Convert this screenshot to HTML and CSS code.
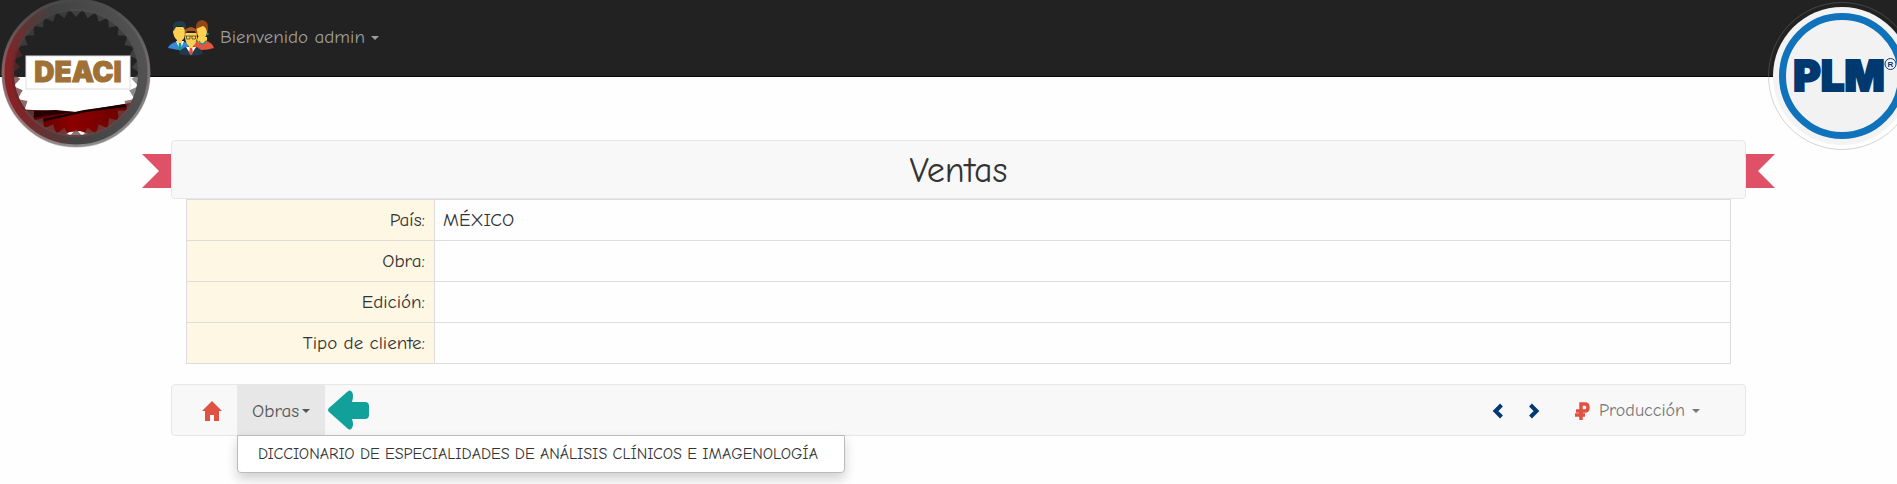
FILE: index.html
```html
<!DOCTYPE html>
<html lang="es">
<head>
<meta charset="utf-8">
<meta name="viewport" content="width=device-width, initial-scale=1">
<title>Ventas</title>
<link rel="stylesheet" href="styles.css">
</head>
<body>
<header class="topbar">
  <svg class="logo logo-deaci" viewBox="0 0 152 150" role="img" aria-label="DEACI">
    <defs>
      <linearGradient id="ring" x1="0" y1=".6" x2="1" y2=".4">
        <stop offset="0" stop-color="#8a2024"/>
        <stop offset=".2" stop-color="#603434"/>
        <stop offset=".42" stop-color="#424242"/>
        <stop offset="1" stop-color="#525252"/>
      </linearGradient>
      <linearGradient id="edge" x1="0" y1="0" x2="0" y2="1">
        <stop offset="0" stop-color="#4a4a4a"/>
        <stop offset=".5" stop-color="#8a8080"/>
        <stop offset="1" stop-color="#aaa"/>
      </linearGradient>
      <linearGradient id="cloth" x1="0" y1="0" x2="1" y2="0">
        <stop offset="0" stop-color="#3c0000"/>
        <stop offset=".45" stop-color="#8c0000"/>
        <stop offset="1" stop-color="#5c0000"/>
      </linearGradient>
      <clipPath id="inside"><circle cx="76" cy="73" r="64"/></clipPath>
      <path id="tooth" d="M69 9L76 17 83 9Z"/>
      <g id="teeth">
        <use href="#tooth"/>
        <use href="#tooth" transform="rotate(12 76 73)"/>
        <use href="#tooth" transform="rotate(24 76 73)"/>
        <use href="#tooth" transform="rotate(36 76 73)"/>
        <use href="#tooth" transform="rotate(48 76 73)"/>
      </g>
    </defs>
    <g clip-path="url(#inside)">
      <path d="M0 0H152V77H0Z" fill="#222"/>
      <path d="M0 77H152V150H0Z" fill="#fff"/>
      <path d="M10 109L76 112 148 100V150H10Z" fill="url(#cloth)"/>
      <path d="M26 111L56 110 76 112 30 118Z" fill="#240000"/>
      <path d="M34 121L84 110 134 103V106L86 112 36 123Z" fill="#160000"/>
      <path d="M60 136L70 132 80 131 94 136 90 142H66Z" fill="#fff"/>
    </g>
    <circle cx="76" cy="73" r="68" fill="none" stroke="url(#ring)" stroke-width="12"/>
    <g fill="#505050" fill-opacity=".65">
      <use href="#teeth"/>
      <use href="#teeth" transform="rotate(60 76 73)"/>
    </g>
    <g fill="#6c4444" fill-opacity=".75">
      <use href="#teeth" transform="rotate(120 76 73)"/>
      <use href="#teeth" transform="rotate(180 76 73)"/>
    </g>
    <use href="#teeth" transform="rotate(240 76 73)" fill="#602828" fill-opacity=".7"/>
    <use href="#teeth" transform="rotate(300 76 73)" fill="#444" fill-opacity=".7"/>
    <circle cx="76" cy="73" r="73" fill="none" stroke="url(#edge)" stroke-opacity=".7" stroke-width="3"/>
    <rect x="26" y="56" width="104" height="33" fill="#fff" stroke="#ddd"/>
    <text class="deaci-text" x="78" y="82" text-anchor="middle">DEACI</text>
  </svg>

  <button class="user" type="button">
    <svg class="people" viewBox="0 0 46 36" aria-hidden="true">
      <path d="M0 28Q1 23 12 21Q24 23 24 30Q12 31 0 28Z" fill="#3a86d8"/>
      <path d="M8 21L12 30 16 21Z" fill="#fff"/><path d="M11 22h2l1 7-2 2-2-2Z" fill="#169c88"/>
      <path d="M6 7H17V14Q16 20 14 20V23H9V20Q6 18 5 12Z" fill="#ffd052"/>
      <path d="M5 10Q4 1 11 1Q19 0 18 9L17 11Q16 6 12 6Q7 6 6 11Z" fill="#203b4c"/>
      <path d="M22 28Q23 22 34 20Q45 22 46 28Q34 32 22 28Z" fill="#e0563f"/>
      <path d="M29 20Q34 28 39 20V17H30Z" fill="#ffd052"/>
      <path d="M31 21Q34 27 38 21" fill="none" stroke="#159d8c" stroke-width="1.5"/>
      <path d="M28 6H39V13Q38 18 34 19Q30 18 29 13Z" fill="#ffd052"/>
      <path d="M28 9Q27 1 34 0Q41 1 40 9Q40 11 39 12Q38 7 35 6Q30 8 28 9Z" fill="#934615"/>
      <circle cx="39.5" cy="14" r="1.2" fill="#159d8c"/>
      <path d="M11 34Q11 28 23 26Q35 28 35 34Q23 37 11 34Z" fill="#203a4a"/>
      <path d="M18 27L23 35 28 27Z" fill="#fff"/><path d="M22 27h2l1 6-2 2-2-2Z" fill="#dd4b40"/>
      <path d="M17 13H29V18Q28 24 25 26V28H21V26Q18 24 17 18Z" fill="#ffd052"/>
      <path d="M17 15Q15 8 23 7Q31 8 29 15L27 11H19Z" fill="#b0571e"/>
      <path d="M17 16H29M18.500 16v3h3.500v-3M24 16v3h3.500v-3" fill="none" stroke="#343434" stroke-width=".7"/>
    </svg>
    <span class="user-name">Bienvenido admin</span>
    <span class="caret"></span>
  </button>

  <svg class="logo logo-plm" viewBox="0 0 129 150" role="img" aria-label="PLM">
    <circle cx="74" cy="76" r="73.500" fill="none" stroke="#888" stroke-opacity=".35"/>
    <circle cx="74" cy="76" r="69" fill="#f3f3f4"/>
    <circle cx="74" cy="76" r="59.500" fill="#f2f2f3" stroke="#1072bb" stroke-width="7"/>
    <text class="plm-text" x="71" y="91" text-anchor="middle">PLM</text>
    <circle cx="122.500" cy="64" r="5.500" fill="none" stroke="#0a3a70"/>
    <text class="reg-text" x="122.500" y="67" text-anchor="middle">R</text>
  </svg>
</header>

<main class="page">
  <div class="ribbon">
    <h1 class="title">Ventas</h1>
  </div>

  <table class="details">
    <tbody>
      <tr><th scope="row">País:</th><td>MÉXICO</td></tr>
      <tr><th scope="row">Obra:</th><td></td></tr>
      <tr><th scope="row">Edición:</th><td></td></tr>
      <tr><th scope="row">Tipo de cliente:</th><td></td></tr>
    </tbody>
  </table>

  <nav class="navbar">
    <a class="item home" href="#" aria-label="Inicio">
      <svg class="home-icon" viewBox="0 0 20 20" aria-hidden="true"><path d="M10 0L20 10H17V20H12V14H8V20H3V10H0Z" fill="#df5142"/></svg>
    </a>
    <div class="dropdown">
      <button class="item toggle" type="button" aria-expanded="true">Obras<span class="caret"></span></button>
      <div class="menu">
        <a class="menu-link" href="#">DICCIONARIO DE ESPECIALIDADES DE ANÁLISIS CLÍNICOS E IMAGENOLOGÍA</a>
      </div>
    </div>
    <svg class="arrow" viewBox="0 0 41 40" aria-hidden="true"><path d="M1 18L19 2Q22-1 24 2Q26 5 24 12H37Q41 12 41 16V25Q41 29 37 29H24Q26 35 24 38Q22 41 19 38L1 22Q-1 20 1 18Z" fill="#12a19a"/></svg>
    <div class="right">
      <a class="step" href="#" aria-label="Anterior"><svg class="chevron" viewBox="0 0 11 16" aria-hidden="true"><path d="M9.500 2L3.500 8l6 6" fill="none" stroke="#003a70" stroke-width="4"/></svg></a>
      <a class="step" href="#" aria-label="Siguiente"><svg class="chevron" viewBox="0 0 11 16" aria-hidden="true"><path d="M1.500 2l6 6-6 6" fill="none" stroke="#003a70" stroke-width="4"/></svg></a>
      <button class="item production" type="button">
        <svg class="ruble" viewBox="0 0 15 18" aria-hidden="true"><path d="M6 18V2H10Q13 2 13 5.500T10 9H1M0 13H10" fill="none" stroke="#df5142" stroke-width="3.500"/></svg>
        <span class="label">Producción</span>
        <span class="caret"></span>
      </button>
    </div>
  </nav>
</main>
</body>
</html>
```
FILE: styles.css
```css
* { box-sizing: border-box; }

body {
  min-height: 100vh;
  margin: 0;
  background: #fefefe;
  color: #333;
  font-family: "Comic Sans MS", "Comic Neue", "Open Sans", sans-serif;
  font-size: 19px;
  line-height: 24px;
}

button {
  border: 0;
  background: none;
  font: inherit;
  cursor: pointer;
}

a { color: inherit; text-decoration: none; }

.topbar {
  position: relative;
  display: flex;
  align-items: flex-start;
  height: 77px;
  padding: 16px 168px;
  background: #222;
  border-bottom: 1px solid #080808;
}

.logo { position: absolute; top: 0; height: 150px; }
.logo-deaci { left: 0; width: 152px; }
.logo-plm { right: 0; width: 129px; }

.deaci-text {
  font: 900 28px Inter, sans-serif;
  fill: #a07035;
  stroke: #a07035;
}

.plm-text {
  font: 900 42px Inter, sans-serif;
  fill: #003870;
  stroke: #003870;
  stroke-width: 2px;
}

.reg-text {
  font: 700 8px "Liberation Sans", sans-serif;
  fill: #0a3a70;
}

.user {
  display: flex;
  align-items: center;
  gap: 6px;
  padding: 4px 0;
  color: #9d9d9d;
}

.user-name { padding-bottom: 2px; }

.people { width: 46px; height: 36px; }

.caret {
  display: inline-block;
  border-top: 4px solid;
  border-right: 4px solid transparent;
  border-left: 4px solid transparent;
  vertical-align: middle;
}

.page { margin: 63px 151px 0 171px; }

.ribbon {
  position: relative;
  height: 59px;
}

.ribbon::before,
.ribbon::after {
  content: "";
  position: absolute;
  top: 14px;
  width: 29px;
  height: 34px;
  background: #df5166;
}

.ribbon::before {
  right: 100%;
  clip-path: polygon(0 0, 100% 0, 100% 100%, 0 100%, 17px 50%);
}

.ribbon::after {
  left: 100%;
  clip-path: polygon(0 0, 100% 0, 12px 50%, 100% 100%, 0 100%);
}

.title {
  margin: 0;
  padding: 13px 0 11px;
  background: #f8f8f8;
  border: 1px solid #e7e7e7;
  border-radius: 4px;
  font-size: 36px;
  font-weight: 400;
  line-height: 33px;
  text-align: center;
}

.details {
  width: calc(100% - 30px);
  margin: 0 15px 20px;
  border-collapse: collapse;
  table-layout: fixed;
}

.details th,
.details td {
  height: 41px;
  padding: 8px;
  border: 1px solid #ddd;
  text-align: left;
}

.details th {
  width: 248px;
  padding-right: 9px;
  background: #fdf7e3;
  font-weight: 400;
  text-align: right;
}

.navbar {
  display: flex;
  align-items: stretch;
  height: 52px;
  padding: 0 30px 0 15px;
  background: #f8f8f8;
  border: 1px solid #e7e7e7;
  border-radius: 4px;
}

.item {
  display: flex;
  align-items: center;
  height: 100%;
  padding: 2px 15px 0;
  color: #777;
}

.home-icon { width: 20px; height: 20px; }

.dropdown { position: relative; }

.toggle {
  gap: 3px;
  background: #e7e7e7;
  color: #555;
}

.menu {
  position: absolute;
  top: 100%;
  left: 0;
  padding: 5px 0;
  background: #fff;
  border: 1px solid #bbb;
  border-radius: 0 0 4px 4px;
  box-shadow: 0 6px 12px rgba(0, 0, 0, .18);
  white-space: nowrap;
}

.menu-link {
  display: block;
  padding: 3px 26px 3px 20px;
  font-size: 16px;
  line-height: 20px;
}

.arrow { width: 41px; height: 40px; margin: 5px 3px; }

.right {
  display: flex;
  align-items: center;
  margin-left: auto;
}

.step { display: flex; padding: 2px 13px 0; }
.chevron { width: 11px; height: 16px; }
.production { gap: 7px; margin-left: 7px; font-size: 18px; }
.ruble { width: 15px; height: 18px; }
.label { padding-left: 2px; }
```
